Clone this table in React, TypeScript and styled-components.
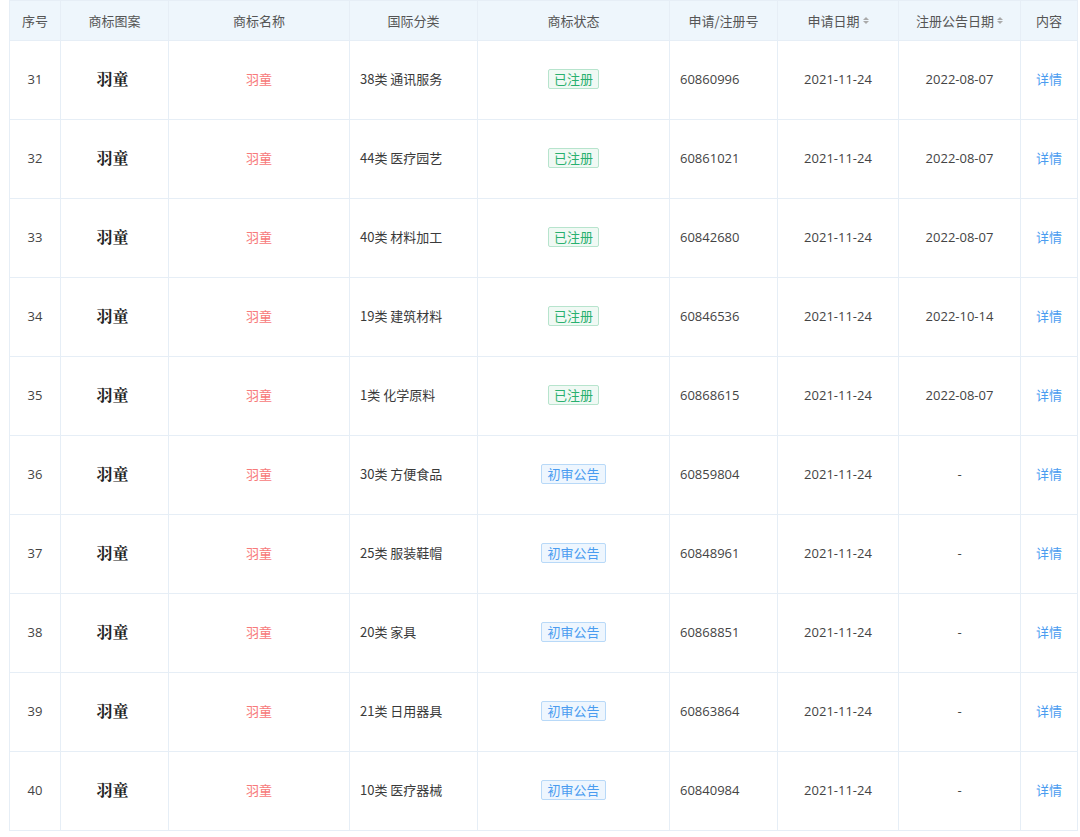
import React from "react";
import styled, { createGlobalStyle } from "styled-components";

const Global = createGlobalStyle`
  html, body { margin: 0; padding: 0; background: #fff; }
  body { font-family: "Microsoft YaHei", "Noto Sans CJK SC", "Noto Sans", sans-serif; }
`;

const Wrap = styled.div`
  padding: 0 3px 0 9px;
`;

const Table = styled.table`
  width: 1068px;
  border-collapse: collapse;
  table-layout: fixed;
  font-size: 13px;
  color: #3a3a3a;
  border: 1px solid #e6eef6;
`;

const Th = styled.th`
  height: 40px;
  box-sizing: border-box;
  padding: 0 0 1px;
  background: #eef6fc;
  color: #555;
  font-weight: normal;
  text-align: center;
  border: 1px solid #e6eef6;
  white-space: nowrap;
`;

const Td = styled.td<{ $align?: "left" | "center" }>`
  height: 79px;
  box-sizing: border-box;
  padding: 0 10px 3px;
  text-align: ${(p) => p.$align ?? "center"};
  border: 1px solid #e6eef6;
  white-space: nowrap;
`;

const Pattern = styled.span`
  font-family: "Noto Serif CJK SC", "Noto Sans CJK SC", serif;
  font-weight: 700;
  font-size: 16px;
  color: #222;
  position: relative;
  left: -2px;
`;

const Name = styled.span`
  color: #f77a7a;
`;

const Num = styled.span`
  font-family: "Open Sans", "Noto Sans", sans-serif;
  color: #444;
`;

const Badge = styled.span<{ $kind: "ok" | "pending" }>`
  display: inline-block;
  height: 20px;
  line-height: 18px;
  box-sizing: border-box;
  padding: 0 5px;
  font-size: 13px;
  border-radius: 2px;
  border: 1px solid ${(p) => (p.$kind === "ok" ? "#b7e4cd" : "#b8d9f8")};
  background: ${(p) => (p.$kind === "ok" ? "#f0f9f4" : "#eef6fe")};
  color: ${(p) => (p.$kind === "ok" ? "#29b06f" : "#4a9cf0")};
`;

const Link = styled.a`
  color: #4a9cf0;
  text-decoration: none;
  cursor: pointer;
`;

const Sort = styled.span`
  display: inline-flex;
  flex-direction: column;
  gap: 1px;
  vertical-align: middle;
  margin-left: 3px;
  position: relative;
  top: -1px;
`;

const Tri = styled.span<{ $up?: boolean }>`
  width: 0;
  height: 0;
  border-left: 3px solid transparent;
  border-right: 3px solid transparent;
  ${(p) => (p.$up ? "border-bottom: 3px solid #aaa;" : "border-top: 3px solid #aaa;")}
`;

const SortIcon = () => (
  <Sort>
    <Tri $up />
    <Tri />
  </Sort>
);

type Row = {
  id: number;
  cls: string;
  ok: boolean;
  no: string;
  pub: string;
};

const rows: Row[] = [
  { id: 31, cls: "38类 通讯服务", ok: true, no: "60860996", pub: "2022-08-07" },
  { id: 32, cls: "44类 医疗园艺", ok: true, no: "60861021", pub: "2022-08-07" },
  { id: 33, cls: "40类 材料加工", ok: true, no: "60842680", pub: "2022-08-07" },
  { id: 34, cls: "19类 建筑材料", ok: true, no: "60846536", pub: "2022-10-14" },
  { id: 35, cls: "1类 化学原料", ok: true, no: "60868615", pub: "2022-08-07" },
  { id: 36, cls: "30类 方便食品", ok: false, no: "60859804", pub: "-" },
  { id: 37, cls: "25类 服装鞋帽", ok: false, no: "60848961", pub: "-" },
  { id: 38, cls: "20类 家具", ok: false, no: "60868851", pub: "-" },
  { id: 39, cls: "21类 日用器具", ok: false, no: "60863864", pub: "-" },
  { id: 40, cls: "10类 医疗器械", ok: false, no: "60840984", pub: "-" },
];

const widths = [51, 108, 181, 128, 192, 108, 121, 122, 57];

export default function App() {
  return (
    <>
      <Global />
      <Wrap>
        <Table>
          <colgroup>
            {widths.map((w, i) => (
              <col key={i} style={{ width: w }} />
            ))}
          </colgroup>
          <thead>
            <tr>
              <Th>序号</Th>
              <Th>商标图案</Th>
              <Th>商标名称</Th>
              <Th>国际分类</Th>
              <Th>商标状态</Th>
              <Th>申请/注册号</Th>
              <Th>
                申请日期
                <SortIcon />
              </Th>
              <Th>
                注册公告日期
                <SortIcon />
              </Th>
              <Th>内容</Th>
            </tr>
          </thead>
          <tbody>
            {rows.map((r) => (
              <tr key={r.id}>
                <Td>
                  <Num>{r.id}</Num>
                </Td>
                <Td>
                  <Pattern>羽童</Pattern>
                </Td>
                <Td>
                  <Name>羽童</Name>
                </Td>
                <Td $align="left">{r.cls}</Td>
                <Td>
                  <Badge $kind={r.ok ? "ok" : "pending"}>{r.ok ? "已注册" : "初审公告"}</Badge>
                </Td>
                <Td $align="left">
                  <Num>{r.no}</Num>
                </Td>
                <Td>
                  <Num>2021-11-24</Num>
                </Td>
                <Td>
                  <Num>{r.pub}</Num>
                </Td>
                <Td>
                  <Link>详情</Link>
                </Td>
              </tr>
            ))}
          </tbody>
        </Table>
      </Wrap>
    </>
  );
}
